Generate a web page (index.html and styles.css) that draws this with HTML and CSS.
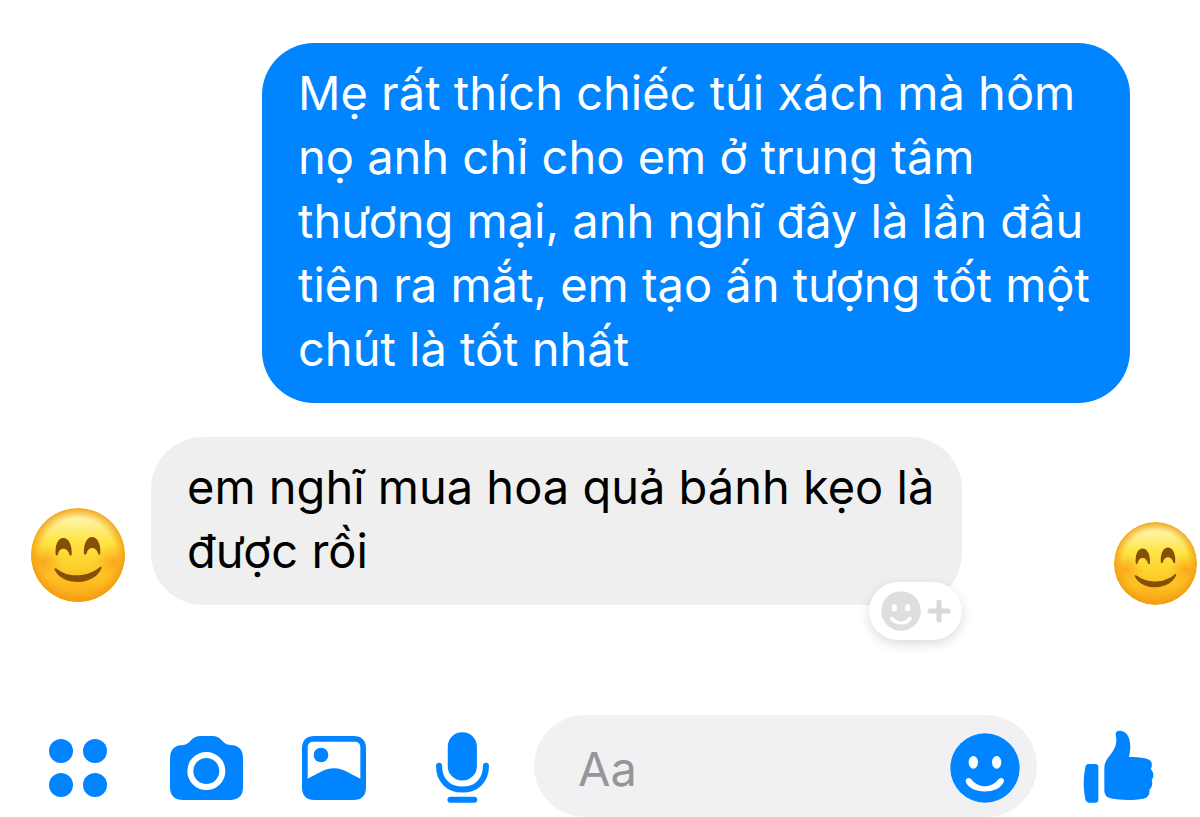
FILE: index.html
```html
<!DOCTYPE html>
<html lang="vi">
<head>
<meta charset="utf-8">
<meta name="viewport" content="width=device-width, initial-scale=1">
<title>Chat</title>
<link rel="stylesheet" href="styles.css">
</head>
<body>
<svg class="defs" aria-hidden="true">
  <defs>
    <linearGradient id="face" x1="0" y1="0" x2="0" y2="1">
      <stop offset="0" stop-color="#ffe98a"/>
      <stop offset="0.12" stop-color="#fff3a4"/>
      <stop offset="0.35" stop-color="#fee545"/>
      <stop offset="0.6" stop-color="#fdd22c"/>
      <stop offset="1" stop-color="#fba315"/>
    </linearGradient>
    <radialGradient id="rim">
      <stop offset="0.78" stop-color="#f5a012" stop-opacity="0"/>
      <stop offset="1" stop-color="#f09a10" stop-opacity="0.85"/>
    </radialGradient>
    <radialGradient id="blush">
      <stop offset="0" stop-color="#fb8514" stop-opacity="0.6"/>
      <stop offset="1" stop-color="#fb9a14" stop-opacity="0"/>
    </radialGradient>
    <clipPath id="disc"><circle cx="233" cy="194" r="141"/></clipPath>
    <symbol id="emoji" viewBox="92 53 282 282">
      <g clip-path="url(#disc)">
        <circle cx="233" cy="194" r="141" fill="url(#face)"/>
        <ellipse cx="130" cy="216" rx="62" ry="54" fill="url(#blush)"/>
        <ellipse cx="338" cy="216" rx="62" ry="54" fill="url(#blush)"/>
        <circle cx="233" cy="194" r="141" fill="url(#rim)"/>
      </g>
      <g fill="#855006">
        <path d="M166 193C163 166 172 143 189 143C207 143 216 167 214 194C212 197 208 196 207 192C205 182 198 175 189 175C181 175 175 181 173 191C172 196 168 197 166 193Z"/>
        <path d="M251 191C249 164 258 140 275 140C293 140 302 164 300 191C298 194 294 193 293 189C290 179 284 173 275 173C267 173 261 179 259 188C258 193 253 194 251 191Z"/>
        <path d="M163 238C161 233 166 233 170 236C190 251 210 256 234 255C261 254 282 244 298 231C302 228 305 230 303 235C292 259 265 274 234 275C201 275 173 261 163 238Z"/>
      </g>
    </symbol>
    <symbol id="smile" viewBox="93 97 208 210">
      <circle cx="197" cy="202" r="104" fill="currentColor"/>
      <g class="smile-mark">
        <ellipse cx="162" cy="185" rx="14" ry="19"/>
        <ellipse cx="232" cy="185" rx="14" ry="19"/>
        <path d="M139 242C138 233 148 229 155 235C178 264 215 264 238 235C245 229 254 233 254 241C242 283 151 283 139 242Z"/>
      </g>
    </symbol>
  </defs>
</svg>

<div class="chat">
  <main class="thread">
    <p class="bubble bubble-sent">Mẹ rất thích chiếc túi xách mà hôm<br>nọ anh chỉ cho em ở trung tâm<br>thương mại, anh nghĩ đây là lần đầu<br>tiên ra mắt, em tạo ấn tượng tốt một<br>chút là tốt nhất</p>
    <div class="row">
      <svg class="avatar" role="img" aria-label="😊"><use href="#emoji"/></svg>
      <div class="bubble bubble-received">
        em nghĩ mua hoa quả bánh kẹo là<br>được rồi
        <button class="react" type="button" aria-label="Bày tỏ cảm xúc">
          <svg class="react-face" aria-hidden="true"><use href="#smile"/></svg>
          <svg class="react-plus" viewBox="0 0 24 24" aria-hidden="true"><path d="M12 3V21M3 12H21"/></svg>
        </button>
      </div>
      <svg class="seen" role="img" aria-label="😊"><use href="#emoji"/></svg>
    </div>
  </main>

  <form class="composer">
    <div class="tools">
      <button class="tool" type="button" aria-label="Ứng dụng">
        <svg width="58" height="58" viewBox="0 0 58 58"><circle cx="12" cy="12" r="12"/><circle cx="46" cy="12" r="12"/><circle cx="12" cy="46" r="12"/><circle cx="46" cy="46" r="12"/></svg>
      </button>
      <button class="tool" type="button" aria-label="Máy ảnh">
        <svg width="73" height="64" viewBox="448 76 219 192"><path d="M448 144Q448 103 488 103C508 103 512 76 537 76H578C602 76 606 103 628 103Q667 103 667 144V230Q667 268 628 268H488Q448 268 448 230Z"/><circle class="lens" cx="557" cy="181" r="48"/></svg>
      </button>
      <button class="tool" type="button" aria-label="Thư viện ảnh">
        <svg width="64" height="64" viewBox="64 76 192 192"><path fill-rule="evenodd" d="M102 76H218Q256 76 256 114V230Q256 268 218 268H102Q64 268 64 230V114Q64 76 102 76ZM98 93Q81 93 81 110V204C112 190 130 173 160 173C190 173 206 190 239 204V110Q239 93 222 93Z"/><circle cx="121" cy="133" r="22"/></svg>
      </button>
      <button class="tool" type="button" aria-label="Ghi âm">
        <svg width="53" height="71" viewBox="464 66 158 212"><rect x="499" y="67" width="87" height="144" rx="43"/><path class="mic-stand" d="M473 167C473 212 502 238 543 238S613 212 613 167M507 268H578"/></svg>
      </button>
    </div>
    <div class="field">
      <input class="input" type="text" placeholder="Aa" aria-label="Aa">
      <button class="tool" type="button" aria-label="Biểu tượng cảm xúc">
        <svg class="field-face" aria-hidden="true"><use href="#smile"/></svg>
      </button>
    </div>
    <button class="tool like" type="button" aria-label="Thích">
      <svg width="71" height="73" viewBox="490 88 213 219"><path d="M507 190H527Q536 190 536 199V297Q536 306 527 306H508Q500 306 497 296Q487 248 497 200Q499 190 507 190Z"/><path d="M588 101C588 91 596 89 606 91C625 95 632 117 632 139Q632 154 628 169C652 168 674 170 688 177C698 182 699 195 693 205C702 212 704 229 696 238C700 248 697 261 689 267C692 278 685 291 672 294C640 299 602 299 573 293Q554 288 554 270V204C554 184 562 175 572 162C585 145 591 133 590 116Z"/></svg>
    </button>
  </form>
</div>
</body>
</html>
```
FILE: styles.css
```css
* { box-sizing: border-box; }

body {
  margin: 0;
  background: #fff;
  font-family: Inter, "Noto Sans", sans-serif;
  font-size: 47px;
  line-height: 64px;
  color: #000;
}

.defs { position: absolute; width: 0; height: 0; }

.chat {
  display: flex;
  flex-direction: column;
  height: 100vh;
  overflow: hidden;
}

.thread {
  flex: 1 0 auto;
  display: flex;
  flex-direction: column;
  gap: 34px;
  padding-top: 43px;
}

.bubble {
  margin: 0;
  padding: 18px 36px 22px;
  border-radius: 52px;
  white-space: nowrap;
}

.bubble-sent {
  align-self: flex-end;
  width: 868px;
  margin-right: 70px;
  background: #0084ff;
  color: #fff;
}

.row {
  display: flex;
  align-items: flex-end;
  padding: 0 3px 0 31px;
}

.bubble-received {
  position: relative;
  width: 811px;
  margin-left: 26px;
  background: #efefef;
}

.avatar { flex: none; width: 94px; height: 94px; margin-bottom: 3px; }
.seen { flex: none; width: 83px; height: 83px; margin-left: auto; }

button {
  display: flex;
  align-items: center;
  justify-content: center;
  padding: 0;
  border: 0;
  background: none;
  cursor: pointer;
}

.react {
  position: absolute;
  right: 0;
  bottom: -35px;
  gap: 6px;
  width: 93px;
  height: 58px;
  border-radius: 29px;
  background: #fff;
  color: #dedede;
  box-shadow: 0 4px 12px rgba(0, 0, 0, 0.14);
}

.react-face { width: 40px; height: 40px; }
.react-plus { width: 24px; height: 24px; fill: none; stroke: #d9d9d9; stroke-width: 5; stroke-linecap: round; }

.smile-mark { fill: #fff; }

.composer {
  flex: none;
  display: flex;
  height: 102px;
  padding-left: 14px;
}

.tools {
  display: grid;
  grid-template-columns: repeat(4, 128px);
  margin-right: 8px;
}

.tool { padding-top: 3px; color: #0084ff; fill: #0084ff; }

.lens { stroke: #fff; stroke-width: 18; }

.mic-stand { fill: none; stroke: #0084ff; stroke-width: 18; stroke-linecap: round; }

.field {
  flex: 1;
  display: flex;
  min-width: 0;
  padding: 0 17px 0 44px;
  border-radius: 51px;
  background: #f1f1f3;
}

.input {
  flex: 1;
  min-width: 0;
  padding: 6px 0 0;
  border: 0;
  outline: 0;
  background: none;
  font: inherit;
  color: #000;
}

.input::placeholder { color: #969698; opacity: 1; }

.field-face { width: 70px; height: 70px; }

.like { width: 163px; padding-top: 0; }
```
